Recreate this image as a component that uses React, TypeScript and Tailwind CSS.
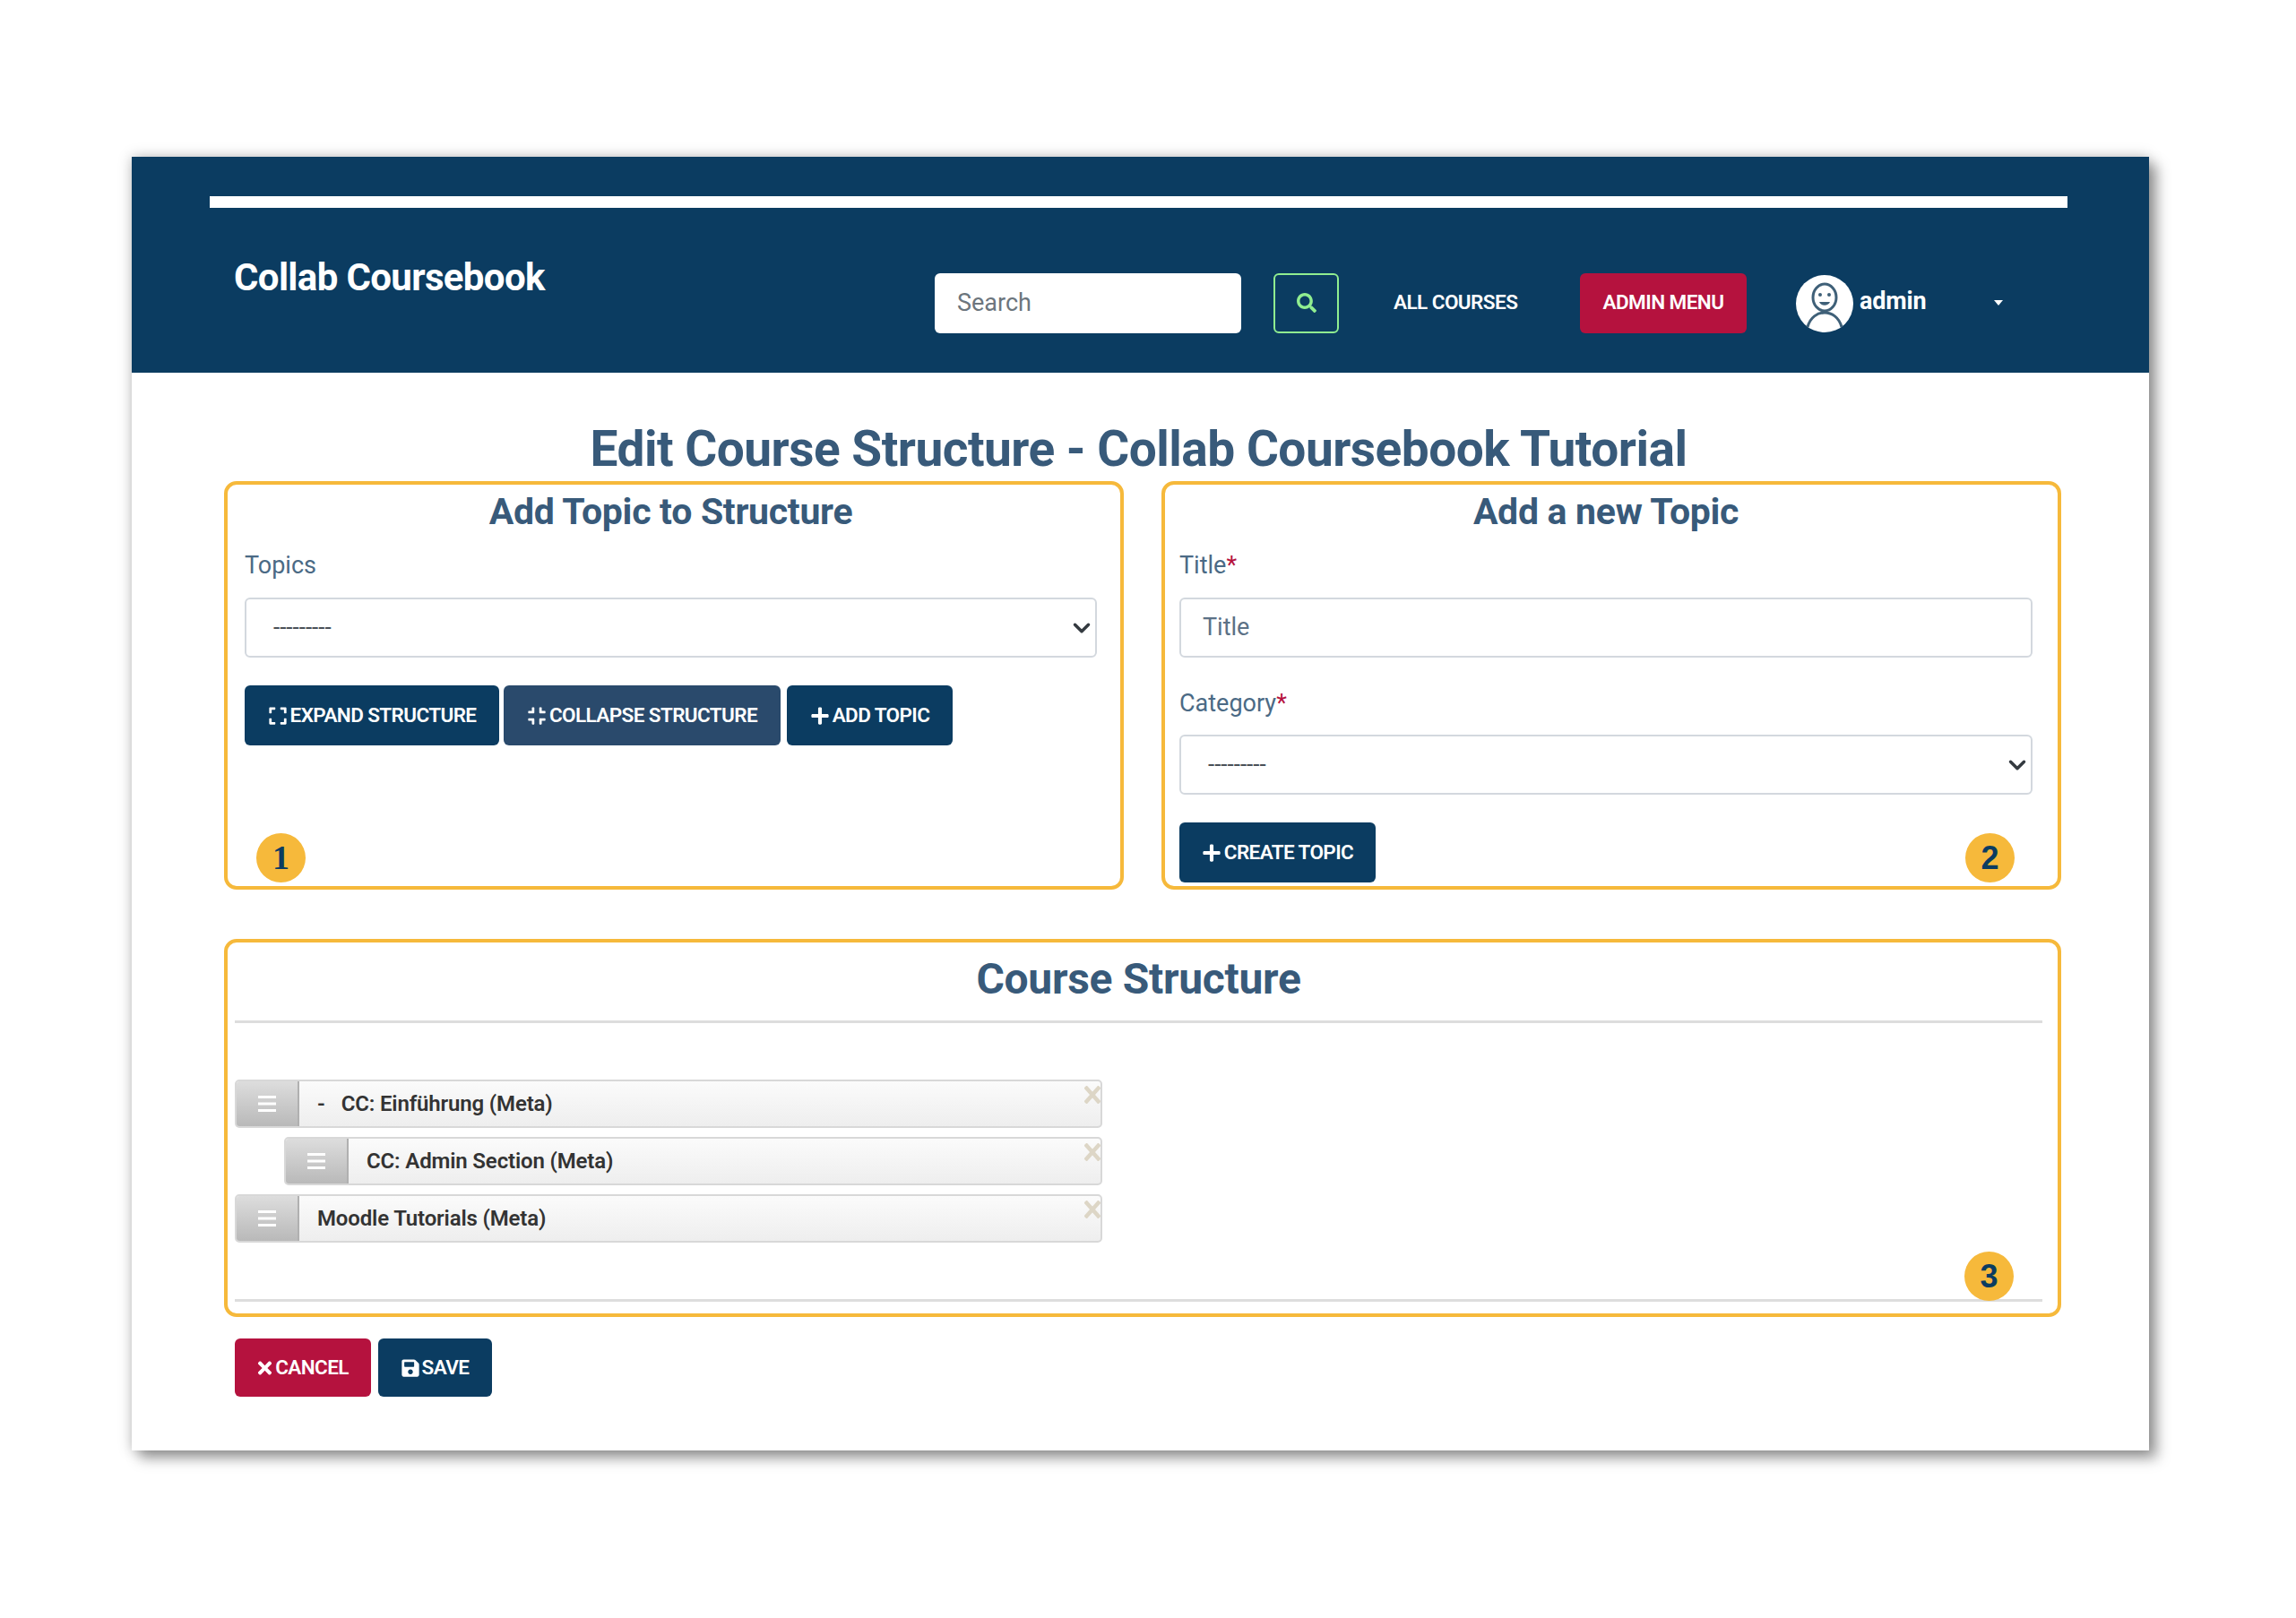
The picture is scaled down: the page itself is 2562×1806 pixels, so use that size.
import { FaCompress, FaExpand, FaPlus, FaSave, FaSearch, FaTimes } from "react-icons/fa";
import type { ReactNode } from "react";

const Btn = ({ icon, label, className }: { icon: ReactNode; label: string; className: string }) => (
  <button className={`flex items-center justify-center gap-[3px] rounded-[6px] text-[22.5px] font-semibold uppercase tracking-[-0.6px] text-white ${className}`}>
    {icon}
    {label}
  </button>
);

const Badge = ({ n, className }: { n: number; className: string }) => (
  <div className={`absolute flex h-[55px] w-[55px] items-center justify-center rounded-full bg-[#f6b93b] text-[#0b3c61] ${className}`}>
    {n}
  </div>
);

const Chevron = () => (
  <svg viewBox="0 0 16 16" className="h-[20px] w-[20px]" fill="none" stroke="#343a40" strokeWidth="2.8" strokeLinecap="round" strokeLinejoin="round">
    <path d="M2 5l6 6 6-6" />
  </svg>
);

const SelectBox = () => (
  <div className="flex h-[67px] items-center justify-between rounded-[6px] border-2 border-[#d3d8de] pr-[5px] pl-[30px] text-[26px] text-[#495057]">
    <span>---------</span>
    <Chevron />
  </div>
);

const Label = ({ text, required }: { text: string; required?: boolean }) => (
  <div className="text-[27px] leading-[36px] text-[#4b6a85]">
    {text}
    {required && <span className="text-[#b5123e]">*</span>}
  </div>
);

const Row = ({ text, dash, indent }: { text: string; dash?: boolean; indent?: boolean }) => (
  <div className={`relative flex h-[54px] items-stretch overflow-hidden rounded-[5px] border-2 border-[#d8d8d8] bg-gradient-to-b from-[#fbfbfb] to-[#eeeeee] text-[24px] font-semibold tracking-[-0.15px] text-[#333] ${indent ? "ml-[55px]" : ""}`}>
    <div className="flex w-[70px] shrink-0 items-center justify-center border-r-2 border-[#b0b0b0] bg-gradient-to-b from-[#dddddd] to-[#b9b9b9]">
      <svg viewBox="0 0 20 18" className="h-[18px] w-[20px]" fill="#ffffff">
        <rect y="0" width="20" height="3" />
        <rect y="7.5" width="20" height="3" />
        <rect y="15" width="20" height="3" />
      </svg>
    </div>
    {dash && <span className="ml-[20px] self-center">-</span>}
    <span className={`self-center ${dash ? "ml-[18px]" : "ml-[20px]"}`}>{text}</span>
    <svg viewBox="0 0 18 20" className="absolute top-[5px] right-0 h-[20px] w-[18px]" stroke="#ddd6c6" strokeWidth="4.5">
      <path d="M1 1l16 18M17 1L1 19" />
    </svg>
  </div>
);

const Avatar = () => (
  <svg viewBox="0 0 64 64" className="h-[64px] w-[64px] shrink-0">
    <circle cx="32" cy="32" r="32" fill="#fff" />
    <ellipse cx="32" cy="25" rx="13" ry="15" fill="none" stroke="#3f6078" strokeWidth="3" />
    <circle cx="27" cy="22" r="2" fill="#3f6078" />
    <circle cx="37" cy="22" r="2" fill="#3f6078" />
    <path d="M26 30c2 5 10 5 12 0z" fill="#3f6078" />
    <path d="M13 58c3-11 11-16 19-16s16 5 19 16" fill="none" stroke="#3f6078" strokeWidth="3" />
  </svg>
);

const badgeSans = "font-['Liberation_Sans',sans-serif] text-[36px] font-bold";

export default function App() {
  return (
    <div className="h-[1806px] w-[2562px] bg-white pt-[175px] pl-[147px] font-['Roboto',sans-serif]">
      <div className="h-[1444px] w-[2251px] bg-white shadow-[0_0_14px_rgba(0,0,0,0.25),9px_9px_14px_rgba(0,0,0,0.35)]">
        <header className="h-[241px] bg-[#0b3c61] px-[87px] pt-[44px]">
          <div className="h-[13px] w-[2073px] bg-white" />
          <div className="flex">
            <div className="w-[809px] pt-[53px] pl-[27px] text-[42px] leading-[50px] font-bold tracking-[-0.65px] text-white">Collab Coursebook</div>
            <div className="flex items-center pt-[73px]">
              <div className="flex h-[67px] w-[342px] items-center rounded-[6px] bg-white pl-[25px] text-[27px] text-[#6c757d]">Search</div>
              <div className="ml-[36px] flex h-[67px] w-[73px] items-center justify-center rounded-[6px] border-2 border-[#90ee90] pb-[2px] text-[#90ee90]">
                <FaSearch className="h-[22px] w-[22px]" />
              </div>
              <div className="ml-[61px] w-[139px] pb-[2px] text-[22.5px] font-semibold tracking-[-0.55px] whitespace-nowrap text-white">ALL COURSES</div>
              <div className="ml-[69px] flex h-[67px] w-[186px] items-center justify-center rounded-[6px] bg-[#b5123e] pb-[2px] text-[22.5px] font-semibold tracking-[-0.55px] whitespace-nowrap text-white">ADMIN MENU</div>
              <div className="ml-[55px]"><Avatar /></div>
              <div className="ml-[7px] w-[75px] -translate-y-[2px] text-[27px] font-bold tracking-[-0.2px] text-white">admin</div>
              <div className="ml-[75px] h-0 w-0 -translate-y-[1px] border-x-[5px] border-t-[6px] border-x-transparent border-t-white" />
            </div>
          </div>
        </header>

        <main className="pt-[50px] pl-[103px]">
          <h1 className="w-[2041px] text-center text-[55px] leading-[70px] font-bold tracking-[-0.5px] text-[#385a7a]">Edit Course Structure - Collab Coursebook Tutorial</h1>
          <div className="grid w-[2050px] grid-cols-[1004px_1004px] gap-x-[42px] pt-[1px]">
            <section className="relative h-[456px] rounded-[14px] border-[4px] border-[#f6b93b] pr-[18px] pl-[19px]">
              <h2 className="w-[951px] pt-[7px] text-center text-[41px] leading-[46px] font-bold tracking-[-0.3px] text-[#385a7a]">Add Topic to Structure</h2>
              <div className="mt-[19px]"><Label text="Topics" /></div>
              <div className="mt-[18px] w-[951px]"><SelectBox /></div>
              <div className="mt-[31px] flex">
                <Btn icon={<FaExpand className="h-[22px] w-[22px]" />} label="Expand Structure" className="h-[67px] w-[284px] bg-[#0b3c61]" />
                <Btn icon={<FaCompress className="h-[22px] w-[22px]" />} label="Collapse Structure" className="ml-[5px] h-[67px] w-[309px] bg-[#2a4a6c]" />
                <Btn icon={<FaPlus className="h-[22px] w-[22px]" />} label="Add Topic" className="ml-[7px] h-[67px] w-[185px] bg-[#0b3c61]" />
              </div>
              <Badge n={1} className="top-[389px] left-[32px] font-['Liberation_Serif',serif] text-[38px] font-bold" />
            </section>
            <section className="relative h-[456px] rounded-[14px] border-[4px] border-[#f6b93b] px-[16px]">
              <h2 className="w-[952px] pt-[7px] text-center text-[41px] leading-[46px] font-bold tracking-[-0.3px] text-[#385a7a]">Add a new Topic</h2>
              <div className="mt-[19px]"><Label text="Title" required /></div>
              <div className="mt-[18px] flex h-[67px] w-[952px] items-center rounded-[6px] border-2 border-[#d3d8de] pl-[24px] text-[27px] text-[#5c7186]">Title</div>
              <div className="mt-[33px]"><Label text="Category" required /></div>
              <div className="mt-[17px] w-[952px]"><SelectBox /></div>
              <div className="mt-[31px]">
                <Btn icon={<FaPlus className="h-[22px] w-[22px]" />} label="Create Topic" className="h-[67px] w-[219px] bg-[#0b3c61]" />
              </div>
              <Badge n={2} className={`top-[389px] left-[893px] ${badgeSans}`} />
            </section>
          </div>

          <section className="relative mt-[55px] h-[422px] w-[2050px] rounded-[14px] border-[4px] border-[#f6b93b] px-[8px]">
            <div className="w-[2017px]">
              <h2 className="pt-[15px] text-center text-[48px] leading-[52px] font-bold tracking-[-0.3px] text-[#385a7a]">Course Structure</h2>
              <div className="mt-[20px] h-[3px] bg-[#dddddd]" />
              <div className="mt-[63px] flex w-[968px] flex-col gap-[10px]">
                <Row text="CC: Einführung (Meta)" dash />
                <Row text="CC: Admin Section (Meta)" indent />
                <Row text="Moodle Tutorials (Meta)" />
              </div>
              <div className="mt-[63px] h-[3px] bg-[#dddddd]" />
            </div>
            <Badge n={3} className={`top-[345px] left-[1938px] ${badgeSans}`} />
          </section>

          <div className="mt-[24px] ml-[12px] flex gap-[8px]">
            <Btn icon={<FaTimes className="h-[22px] w-[17px]" />} label="Cancel" className="h-[65px] w-[152px] bg-[#b5123e]" />
            <Btn icon={<FaSave className="h-[22px] w-[20px]" />} label="Save" className="h-[65px] w-[127px] bg-[#0b3c61]" />
          </div>
        </main>
      </div>
    </div>
  );
}
